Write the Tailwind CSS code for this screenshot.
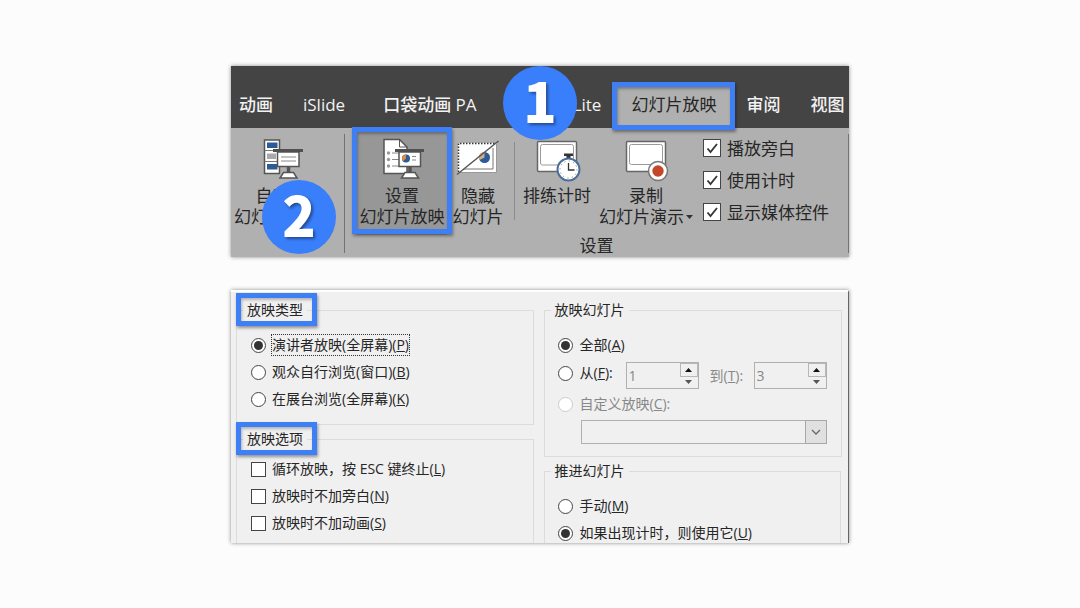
<!DOCTYPE html>
<html lang="zh-CN">

<head>
  <meta charset="UTF-8" />
  <meta name="viewport" content="width=device-width, initial-scale=1" />
  <title>设置幻灯片放映</title>
  <script src="https://cdn.jsdelivr.net/npm/@tailwindcss/browser@4"></script>
</head>

<body class="min-h-screen bg-[#fcfcfc] pt-[66px] font-['Open_Sans','Noto_Sans_CJK_SC',sans-serif] text-[#262626]">

  <main class="mx-auto flex w-full max-w-[618px] flex-col gap-[33px]">

    <!-- Ribbon -->
    <section class="relative bg-[#b0b0b0] text-[17px] leading-[21px] shadow-[0_0_4px_rgba(0,0,0,0.45)]">
      <nav class="flex h-[62px] items-end gap-[30px] bg-[#444444] pl-2 font-medium whitespace-nowrap text-[#f2f2f2]">
        <button class="h-12">动画</button>
        <button class="h-12">iSlide</button>
        <button class="h-12 pl-2">口袋动画 PA</button>
        <button class="h-12">OneKey Lite</button>
        <button class="relative -mx-3.5 h-12 px-3.5">
          <span class="absolute inset-x-0 top-1.5 bottom-0 bg-[#b0b0b0]"></span>
          <span class="relative font-normal text-[#262626]">幻灯片放映</span>
          <span class="absolute -inset-x-[5px] top-0.5 -bottom-0.5 z-10 border-5 border-[#3f7ff5] shadow-[1px_2px_3px_rgba(0,0,0,0.4),inset_1px_2px_3px_rgba(0,0,0,0.3)]"></span>
        </button>
        <button class="h-12">审阅</button>
        <button class="h-12">视图</button>
      </nav>

      <div class="flex h-[129px] whitespace-nowrap">
        <button class="flex w-[100px] shrink-0 flex-col items-center pt-2">
          <svg class="size-12" viewBox="-2 0 48 48" fill="none" stroke="#555">
            <path d="M5.500 4h15v33.500h-15z" fill="#fff" stroke-width="1.500" />
            <path d="M5.500 14.500h15M5.500 25.500h15" stroke="#777" />
            <path d="M8 6.500h10.500v5.500H8zM8 28h10.500v5.500H8z" fill="#2b5c97" stroke="none" />
            <path d="M8 17.500h9v5.500H8z" fill="#aaa" stroke="none" />
            <path d="M18.500 16h21.500v14.500H18.500z" fill="#fff" stroke-width="1.500" />
            <path d="M14 13h30v3H14z" fill="#505050" stroke="none" />
            <path d="M22 21h15M22 25h15" stroke="#888" />
            <path d="M29.500 31v5.500" stroke-width="3.500" />
            <path d="M24.500 36.500h10l3.500 5.500H21z" fill="#fff" stroke-width="1.500" />
          </svg>
          <span class="mt-px">自定义</span>
          <span class="flex items-center gap-0.5">幻灯片放映
            <svg class="h-1 w-[7px]" viewBox="0 0 7 4"><path d="M0 0h7L3.500 4z" fill="#333" /></svg>
          </span>
        </button>
        <span class="ml-[13px] mt-1.5 h-[119px] w-px shrink-0 bg-[#737373]"></span>

        <div class="flex min-w-0 grow flex-col">
          <div class="flex h-[107px] pl-3">
            <button class="relative flex w-[90px] shrink-0 flex-col items-center bg-[#979797] pt-2">
              <svg class="size-12" viewBox="0 0 48 48" fill="none" stroke="#555">
                <path d="M6 3.500h15.500L29 11v26.500H6z" fill="#fff" stroke-width="1.500" />
                <path d="M21.500 3.500V11H29" />
                <path d="M14 17h7M14 23.500h7M14 30h7" stroke="#888" />
                <g fill="#999" stroke="none">
                  <circle cx="10.500" cy="17" r="1.700" />
                  <circle cx="10.500" cy="23.500" r="1.700" />
                  <circle cx="10.500" cy="30" r="1.700" />
                </g>
                <path d="M21 16h21.500v14.500H21z" fill="#fff" stroke-width="1.500" />
                <path d="M17 13h29v3H17z" fill="#505050" stroke="none" />
                <circle cx="28" cy="22.500" r="4" fill="#2b5c97" stroke="none" />
                <path d="M28 22.500v-4a4 4 0 0 0-3 6.700z" fill="#e0883c" stroke="none" />
                <path d="M34 20.500h4M34 24h4" stroke="#888" />
                <path d="M32 31v5.500" stroke-width="3.500" />
                <path d="M27 36.500h10l3.500 5.500h-17z" fill="#fff" stroke-width="1.500" />
              </svg>
              <span class="mt-px">设置</span>
              <span>幻灯片放映</span>
              <span class="absolute -inset-x-[5px] -top-px bottom-px z-10 border-5 border-[#3f7ff5] shadow-[1px_2px_3px_rgba(0,0,0,0.4),inset_1px_2px_3px_rgba(0,0,0,0.3)]"></span>
            </button>
            <button class="flex w-[62px] shrink-0 flex-col items-center pt-2">
              <svg class="size-12" viewBox="3 0 48 48" fill="none" stroke="#555">
                <path d="M7 7h38.500v29.500H7z" fill="#fff" stroke="none" />
                <path d="M7.500 36V7.500H45" stroke="#333" stroke-width="1.500" stroke-dasharray="1.500 1.500" />
                <path d="M45.500 8v28.500H8" stroke="#999" />
                <path d="M42 12v21H13" stroke="#777" />
                <circle cx="33.500" cy="21.500" r="5.500" fill="#2b5c97" stroke="none" />
                <path d="M33.500 21.500V16a5.500 5.500 0 0 0-5 8z" fill="#d9ad84" stroke="none" />
                <path d="M6 38.500L47.500 5" stroke-width="1.500" />
              </svg>
              <span class="mt-px">隐藏</span>
              <span>幻灯片</span>
            </button>
            <span class="mt-3.5 ml-[5px] h-[78px] w-px shrink-0 bg-[#8c8c8c]"></span>
            <button class="flex w-[84px] shrink-0 flex-col items-center pt-2">
              <svg class="size-12" viewBox="2 0 48 48" fill="none" stroke="#666">
                <rect x="6.500" y="5.500" width="39" height="30" rx="1" fill="#fff" stroke-width="1.500" />
                <rect x="9.500" y="8.500" width="33" height="20.500" rx="2" stroke="#999" />
                <path d="M33 17.500h9v2.500h-2.500v3h-4v-3H33z" fill="#333" stroke="none" />
                <circle cx="37.500" cy="33.500" r="11" fill="#fff" stroke="#4b6f9a" stroke-width="2" />
                <circle cx="37.500" cy="33.500" r="8.500" stroke="#777" stroke-dasharray="1 3.450" />
                <path d="M37.500 27v7h6" stroke="#333" stroke-width="1.300" />
              </svg>
              <span class="mt-px">排练计时</span>
            </button>
            <button class="flex w-[94px] shrink-0 flex-col items-center pt-2">
              <svg class="size-12" viewBox="3 0 48 48" fill="none" stroke="#666">
                <rect x="7.500" y="5.500" width="39" height="30" rx="1" fill="#fff" stroke-width="1.500" />
                <rect x="10.500" y="8.500" width="33" height="20" rx="2" stroke="#999" />
                <circle cx="39" cy="35" r="9.500" fill="#fff" stroke="#777" stroke-width="1.500" />
                <circle cx="39" cy="35" r="5.700" fill="#c5472a" stroke="none" />
              </svg>
              <span class="mt-px">录制</span>
              <span class="flex items-center gap-0.5">幻灯片演示
                <svg class="h-1 w-[7px]" viewBox="0 0 7 4"><path d="M0 0h7L3.500 4z" fill="#333" /></svg>
              </span>
            </button>
            <div class="ml-2.5 pt-1">
              <label class="flex h-8 items-center gap-1.5">
                <span class="relative size-[18px]">
                  <input type="checkbox" checked class="block size-[18px] appearance-none border border-[#444] bg-white" />
                  <svg class="pointer-events-none absolute inset-0 size-[18px]" viewBox="0 0 18 18"><path d="M4.500 9.500l3 3.500 6.500-8" fill="none" stroke="#333" stroke-width="1.800" /></svg>
                </span>
                播放旁白
              </label>
              <label class="flex h-8 items-center gap-1.5">
                <span class="relative size-[18px]">
                  <input type="checkbox" checked class="block size-[18px] appearance-none border border-[#444] bg-white" />
                  <svg class="pointer-events-none absolute inset-0 size-[18px]" viewBox="0 0 18 18"><path d="M4.500 9.500l3 3.500 6.500-8" fill="none" stroke="#333" stroke-width="1.800" /></svg>
                </span>
                使用计时
              </label>
              <label class="flex h-8 items-center gap-1.5">
                <span class="relative size-[18px]">
                  <input type="checkbox" checked class="block size-[18px] appearance-none border border-[#444] bg-white" />
                  <svg class="pointer-events-none absolute inset-0 size-[18px]" viewBox="0 0 18 18"><path d="M4.500 9.500l3 3.500 6.500-8" fill="none" stroke="#333" stroke-width="1.800" /></svg>
                </span>
                显示媒体控件
              </label>
            </div>
          </div>
          <p class="text-center">设置</p>
        </div>
        <span class="mt-1.5 h-[119px] w-px shrink-0 bg-[#737373]"></span>
      </div>

      <!-- Step badges -->
      <span class="absolute top-0 left-[272px] z-20 flex size-[74px] items-center justify-center rounded-full bg-[#397efa] pb-2 font-['Noto_Sans_CJK_SC',sans-serif] text-[55px] leading-none font-black text-white [text-shadow:2px_2px_3px_rgba(0,0,0,0.4)]">1</span>
      <span class="absolute top-[114px] left-[31px] z-20 flex size-[74px] items-center justify-center rounded-full bg-[#397efa] pb-2 font-['Noto_Sans_CJK_SC',sans-serif] text-[55px] leading-none font-black text-white [text-shadow:2px_2px_3px_rgba(0,0,0,0.4)]">2</span>
    </section>

    <!-- Set up show dialog -->
    <form class="grid grid-cols-2 gap-x-2.5 border-t-2 border-r border-t-white border-r-[#666] bg-[#f0f0f0] pt-2 pr-[7px] pl-[5px] text-sm leading-5 whitespace-nowrap shadow-[0_0_4px_rgba(0,0,0,0.45)]">
      <div class="flex flex-col gap-1">
        <fieldset class="flex flex-col gap-[7px] border border-[#dcdcdc] pt-[15px] pb-[15px] pl-3.5">
          <legend class="relative -ml-2 px-1">放映类型
            <span class="absolute -top-[7px] -right-2.5 -bottom-1.5 -left-[7px] border-5 border-[#3f7ff5] shadow-[1px_2px_3px_rgba(0,0,0,0.4),inset_1px_2px_3px_rgba(0,0,0,0.25)]"></span>
          </legend>
          <label class="flex h-5 items-center gap-1.5">
            <input type="radio" name="showType" checked class="grid size-[15px] appearance-none place-items-center rounded-full border border-[#444] bg-white before:size-[9px] before:rounded-full checked:before:bg-[#333]" />
            <span class="outline outline-dotted outline-[#333]">演讲者放映(全屏幕)(<u>P</u>)</span>
          </label>
          <label class="flex h-5 items-center gap-1.5">
            <input type="radio" name="showType" class="size-[15px] appearance-none rounded-full border border-[#444] bg-white" />
            <span>观众自行浏览(窗口)(<u>B</u>)</span>
          </label>
          <label class="flex h-5 items-center gap-1.5">
            <input type="radio" name="showType" class="size-[15px] appearance-none rounded-full border border-[#444] bg-white" />
            <span>在展台浏览(全屏幕)(<u>K</u>)</span>
          </label>
        </fieldset>

        <fieldset class="flex grow flex-col gap-[7px] border border-b-0 border-[#dcdcdc] pt-2.5 pl-3.5">
          <legend class="relative -ml-2 px-1">放映选项
            <span class="absolute -top-[7px] -right-2.5 -bottom-1.5 -left-[7px] border-5 border-[#3f7ff5] shadow-[1px_2px_3px_rgba(0,0,0,0.4),inset_1px_2px_3px_rgba(0,0,0,0.25)]"></span>
          </legend>
          <label class="flex h-5 items-center gap-1.5">
            <input type="checkbox" class="size-[15px] appearance-none border border-[#444] bg-white" />
            <span>循环放映，按 ESC 键终止(<u>L</u>)</span>
          </label>
          <label class="flex h-5 items-center gap-1.5">
            <input type="checkbox" class="size-[15px] appearance-none border border-[#444] bg-white" />
            <span>放映时不加旁白(<u>N</u>)</span>
          </label>
          <label class="flex h-5 items-center gap-1.5">
            <input type="checkbox" class="size-[15px] appearance-none border border-[#444] bg-white" />
            <span>放映时不加动画(<u>S</u>)</span>
          </label>
        </fieldset>
      </div>

      <div class="flex flex-col gap-1">
        <fieldset class="border border-[#dcdcdc] pt-[15px] pr-3.5 pb-3 pl-[13px]">
          <legend class="-ml-[7px] px-1">放映幻灯片</legend>
          <label class="flex h-5 items-center gap-[7px]">
            <input type="radio" name="range" checked class="grid size-[15px] appearance-none place-items-center rounded-full border border-[#444] bg-white before:size-[9px] before:rounded-full checked:before:bg-[#333]" />
            <span>全部(<u>A</u>)</span>
          </label>
          <div class="mt-[7px] flex items-center">
            <label class="flex h-[22px] w-[68px] items-center gap-[7px] self-start">
              <input type="radio" name="range" class="size-[15px] appearance-none rounded-full border border-[#444] bg-white" />
              <span>从(<u>F</u>):</span>
            </label>
            <div class="flex h-[27px] w-[73px] border border-[#b0b0b0]">
              <input type="text" aria-label="从" value="1" disabled class="w-full min-w-0 px-0.5 text-[#888]" />
              <div class="flex w-[18px] shrink-0 flex-col">
                <button type="button" aria-label="增加" class="flex grow items-center justify-center border border-[#b8b8b8]">
                  <svg class="h-1 w-[7px]" viewBox="0 0 7 4"><path d="M0 4h7L3.500 0z" fill="#111" /></svg>
                </button>
                <button type="button" aria-label="减少" class="flex grow items-center justify-center">
                  <svg class="h-1 w-[7px]" viewBox="0 0 7 4"><path d="M0 0h7L3.500 4z" fill="#555" /></svg>
                </button>
              </div>
            </div>
            <label for="toSlide" class="ml-[11px] w-11 text-[#888]">到(<u>T</u>):</label>
            <div class="flex h-[27px] w-[73px] border border-[#b0b0b0]">
              <input type="text" id="toSlide" value="3" disabled class="w-full min-w-0 px-0.5 text-[#888]" />
              <div class="flex w-[18px] shrink-0 flex-col">
                <button type="button" aria-label="增加" class="flex grow items-center justify-center border border-[#b8b8b8]">
                  <svg class="h-1 w-[7px]" viewBox="0 0 7 4"><path d="M0 4h7L3.500 0z" fill="#111" /></svg>
                </button>
                <button type="button" aria-label="减少" class="flex grow items-center justify-center">
                  <svg class="h-1 w-[7px]" viewBox="0 0 7 4"><path d="M0 0h7L3.500 4z" fill="#555" /></svg>
                </button>
              </div>
            </div>
          </div>
          <label class="mt-[5px] flex h-5 items-center gap-[7px] text-[#888]">
            <input type="radio" name="range" disabled class="size-[15px] appearance-none rounded-full border border-[#ccc] bg-white" />
            <span>自定义放映(<u>C</u>):</span>
          </label>
          <div class="relative mt-1.5 ml-[23px] h-6">
            <select aria-label="自定义放映" disabled class="block h-6 w-full appearance-none border border-[#b0b0b0]">
              <option></option>
            </select>
            <span class="pointer-events-none absolute inset-y-0 right-0 flex w-[22px] items-center justify-center border border-[#a8a8a8] bg-[#e0e0e0]">
              <svg class="h-[6px] w-[10px]" viewBox="0 0 10 6"><path d="M1 1l4 4 4-4" fill="none" stroke="#666" stroke-width="1.300" /></svg>
            </span>
          </div>
        </fieldset>

        <fieldset class="flex grow flex-col gap-[7px] border border-b-0 border-[#dcdcdc] pt-[15px] pl-[13px]">
          <legend class="-ml-[7px] px-1">推进幻灯片</legend>
          <label class="flex h-5 items-center gap-[7px]">
            <input type="radio" name="advance" class="size-[15px] appearance-none rounded-full border border-[#444] bg-white" />
            <span>手动(<u>M</u>)</span>
          </label>
          <label class="flex h-5 items-center gap-[7px]">
            <input type="radio" name="advance" checked class="grid size-[15px] appearance-none place-items-center rounded-full border border-[#444] bg-white before:size-[9px] before:rounded-full checked:before:bg-[#333]" />
            <span>如果出现计时，则使用它(<u>U</u>)</span>
          </label>
        </fieldset>
      </div>
    </form>
  </main>

</body>

</html>
